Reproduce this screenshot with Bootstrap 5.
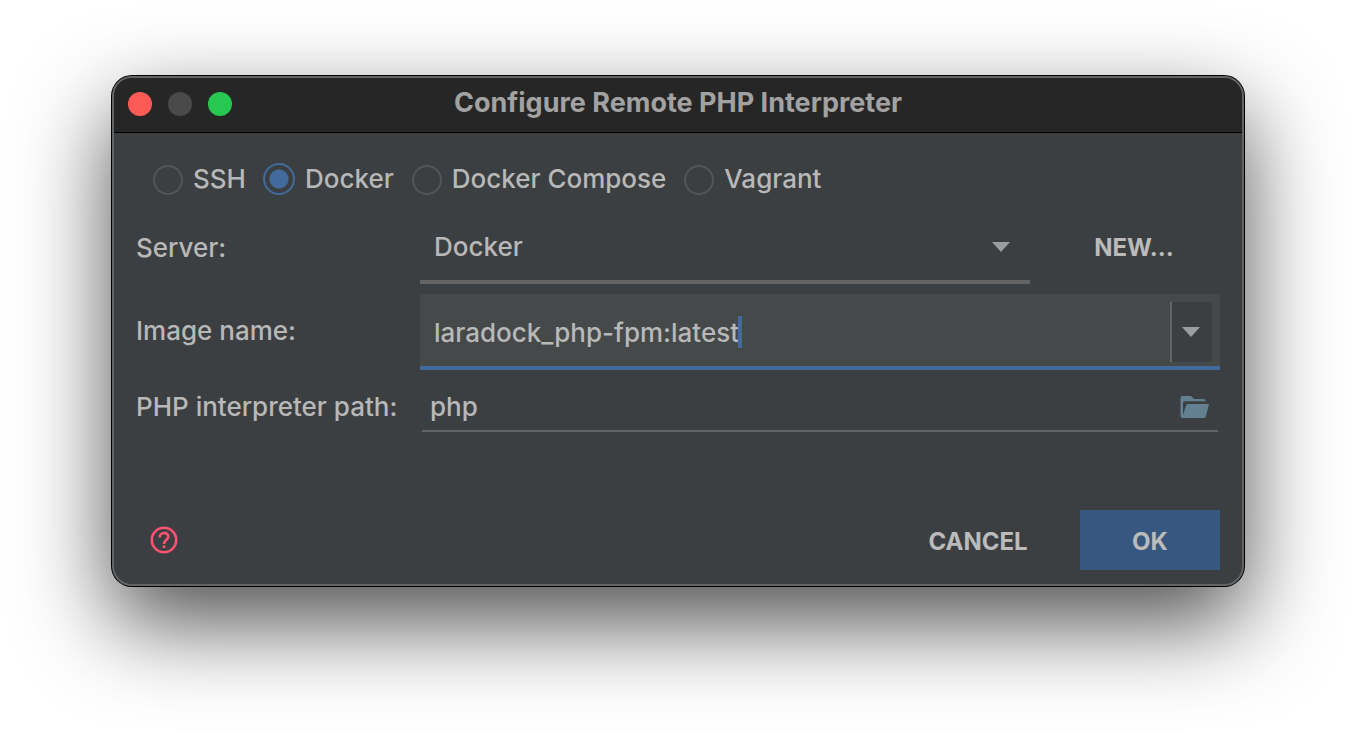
<!DOCTYPE html>
<html lang="en">
<head>
<meta charset="utf-8">
<meta name="viewport" content="width=device-width, initial-scale=1">
<title>Configure Remote PHP Interpreter</title>
<link href="https://cdn.jsdelivr.net/npm/bootstrap@5.3.0/dist/css/bootstrap.min.css" rel="stylesheet">
<style>
  body { background: #fff; font-family: Inter, "Liberation Sans", sans-serif; font-size: 26px; font-weight: 500; line-height: 32px; color: #b8b8b8; }
  .stage { padding: 76px 112px; min-height: 100vh; }
  .dialog { background: #3c3f41; border: 2px solid #636465; border-radius: 20px; box-shadow: 0 0 0 1px #000, 0 36px 90px rgba(0,0,0,.7); }
  .titlebar { height: 55px; background: #262626; border-bottom: 1px solid #000; border-radius: 18px 18px 0 0; padding: 0 14px 2px; }
  .titlebar h1 { font-size: 27px; line-height: 32px; font-weight: 700; color: #a2a2a2; padding-bottom: 2px; }
  .light { width: 24px; height: 24px; border: 0; padding: 0; border-radius: 50%; }
  .light-close { background: #ff5b56; }
  .light-min { background: #4a4a4a; }
  .light-zoom { background: #27c84f; }
  .lights, .lights-balance { width: 104px; }
  .dialog-content { padding: 23px 22px 14px; }
  .kinds { height: 46px; padding-left: 16px; gap: 17px; margin-bottom: 12px; }
  .kinds label { margin-left: 10px; }
  .kinds .form-check-input { width: 30px; height: 30px; margin: 2px 0 0 1px; border: 2px solid #555; background: transparent; box-shadow: none; float: none; }
  .kinds .form-check-input:checked { width: 32px; height: 32px; margin: 0; border-color: #436a9c; background: radial-gradient(circle, #436a9c 9px, transparent 10px); }
  .form-line { display: grid; grid-template-columns: 284px minmax(0, 1fr); align-items: center; }
  .form-line > label { padding-bottom: 2px; }
  .form-line + .form-line { margin-top: 10px; }
  .form-line + .line-path { margin-top: 14px; }
  .plain { color: #b8b8b8; background: transparent; border: 0; border-radius: 0; font-size: 26px; font-weight: 500; line-height: 32px; width: 100%; outline: 0; }
  .server { height: 70px; padding: 0 14px; border-bottom: 4px solid #646464; appearance: none; }
  .arrow { right: 20px; top: 28px; pointer-events: none; }
  .btn-flat { color: #bbb; font-size: 24px; line-height: 32px; font-weight: 700; border: 0; border-radius: 0; height: 60px; padding: 3px 0 0; }
  .btn-flat:hover { color: #ddd; }
  .server-line { gap: 18px; }
  .btn-new { width: 172px; padding: 0 0 2px; }
  .btn-cancel { width: 180px; }
  .btn-ok { width: 140px; background: #365880; }
  .btn-ok:hover { background: #3d6493; }
  .combo { height: 76px; background: #45494a; border-bottom: 4px solid #436a9c; padding: 4px 8px 0 0; }
  .combo .plain { padding: 2px 14px 0; }
  .text-caret { width: 4px; height: 32px; left: 318px; top: 22px; background: #436a9c; }
  .combo-toggle { width: 42px; height: 60px; flex: none; background: #3c3f41; border: 0; border-left: 2px solid #646464; padding: 0 2px 0 0; }
  .path { height: 48px; margin: 0 2px; padding: 0 8px; border-bottom: 2px solid #646464; }
  .actions { margin-top: 78px; gap: 12px; }
  .icon-only { background: transparent; border: 0; padding: 0; }
  .help { margin-left: 14px; }
</style>
</head>
<body>
<main class="stage">
  <section class="dialog" role="dialog" aria-labelledby="dialog-title">
    <header class="titlebar d-flex align-items-center justify-content-between">
      <div class="lights d-flex gap-3">
        <button class="light light-close" type="button" aria-label="Close"></button>
        <button class="light light-min" type="button" aria-label="Minimize"></button>
        <button class="light light-zoom" type="button" aria-label="Zoom"></button>
      </div>
      <h1 class="m-0 text-center" id="dialog-title">Configure Remote PHP Interpreter</h1>
      <div class="lights-balance"></div>
    </header>

    <form class="dialog-content" onsubmit="return false">
      <div class="kinds d-flex align-items-center">
        <div class="d-flex align-items-center"><input class="form-check-input" type="radio" name="kind" id="kind-ssh"><label for="kind-ssh">SSH</label></div>
        <div class="d-flex align-items-center"><input class="form-check-input" type="radio" name="kind" id="kind-docker" checked><label for="kind-docker">Docker</label></div>
        <div class="d-flex align-items-center"><input class="form-check-input" type="radio" name="kind" id="kind-compose"><label for="kind-compose">Docker Compose</label></div>
        <div class="d-flex align-items-center"><input class="form-check-input" type="radio" name="kind" id="kind-vagrant"><label for="kind-vagrant">Vagrant</label></div>
      </div>

      <div class="form-line">
        <label for="server">Server:</label>
        <div class="server-line d-flex align-items-center">
          <div class="position-relative flex-grow-1">
            <select class="plain server d-block" id="server"><option>Docker</option></select>
            <svg class="arrow position-absolute" width="18" height="10" viewBox="0 0 18 10" aria-hidden="true"><path d="M0 0H18L9 10Z" fill="#9b9ea1"/></svg>
          </div>
          <button class="btn btn-flat btn-new" type="button">NEW...</button>
        </div>
      </div>

      <div class="form-line">
        <label for="image">Image name:</label>
        <div class="combo position-relative d-flex align-items-center">
          <input class="plain" id="image" type="text" value="laradock_php-fpm:latest" spellcheck="false">
          <span class="text-caret position-absolute"></span>
          <button class="combo-toggle d-flex align-items-center justify-content-center" type="button" aria-label="Show images">
            <svg width="18" height="10" viewBox="0 0 18 10" aria-hidden="true"><path d="M0 0H18L9 10Z" fill="#9b9ea1"/></svg>
          </button>
        </div>
      </div>

      <div class="form-line line-path">
        <label for="path">PHP interpreter path:</label>
        <div class="path d-flex align-items-center">
          <input class="plain p-0" id="path" type="text" value="php" spellcheck="false">
          <button class="icon-only d-flex" type="button" aria-label="Browse">
            <svg width="30" height="22" viewBox="0 0 30 22" aria-hidden="true"><path d="M.500 19V2Q.500 0 2.500 0H11L14 3H23.500Q25.500 3 26 5.500L29 8L26 20Q25.500 22 24 22H2.500Q.500 22 .500 19Z" fill="#62808f"/><path d="M3 19V7Q3 5.300 5 5.300H26V3H30V8H7.500Q6.300 8 6 9.500Z" fill="#3c3f41"/></svg>
          </button>
        </div>
      </div>

      <div class="actions d-flex align-items-center">
        <button class="icon-only help d-flex me-auto" type="button" aria-label="Help">
          <svg width="28" height="28" viewBox="0 0 28 28" fill="none" stroke="#ff5370" aria-hidden="true"><circle cx="14" cy="14" r="12.200" stroke-width="2.600"/><path d="M9.700 11.500C9.700 5.600 18.300 5.600 18.300 10.700C18.300 13.700 14 14 14 18" stroke-width="2.700"/><path d="M14 19.500V22" stroke-width="2.800"/></svg>
        </button>
        <button class="btn btn-flat btn-cancel" type="button">CANCEL</button>
        <button class="btn btn-flat btn-ok" type="submit">OK</button>
      </div>
    </form>
  </section>
</main>
<script src="https://cdn.jsdelivr.net/npm/bootstrap@5.3.0/dist/js/bootstrap.bundle.min.js"></script>
</body>
</html>
